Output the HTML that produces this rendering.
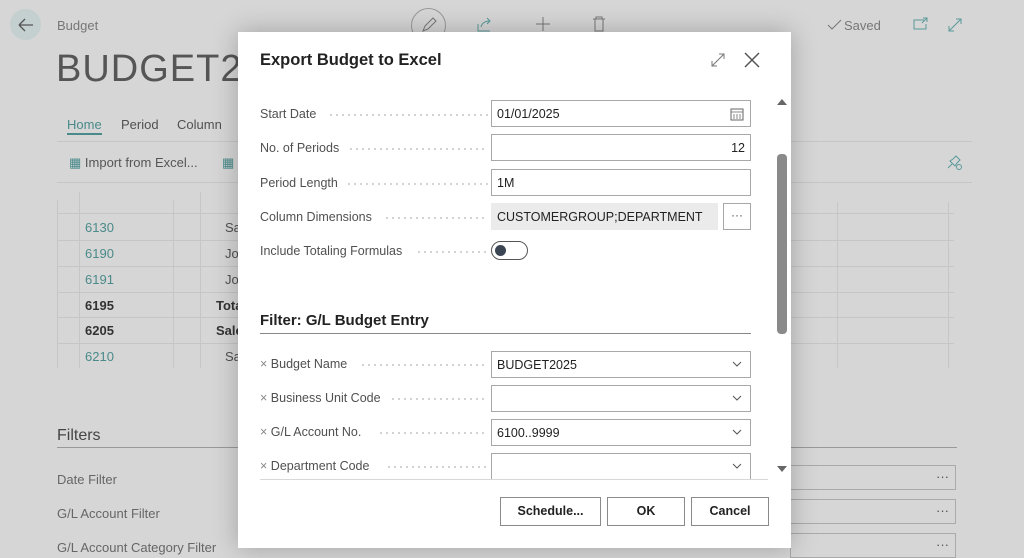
<!DOCTYPE html>
<html><head><meta charset="utf-8"><style>
*{box-sizing:border-box;margin:0;padding:0}
body{width:1024px;height:555px;overflow:hidden;background:#d6d6d6;font-family:"Liberation Sans",sans-serif;position:relative;color:#505050}
.a{position:absolute}
.t{font-size:13px;white-space:nowrap}
.teal{color:#4a8a8a}
.dlg{position:absolute;left:238px;top:32px;width:553px;height:516px;background:#fff;box-shadow:0 0 24px rgba(0,0,0,.25)}
.lbl{position:absolute;left:22px;font-size:12.5px;color:#505050;white-space:nowrap}
.dots{position:absolute;height:2px;background-image:radial-gradient(circle,#c4c4c4 0.8px,transparent 1px);background-size:6px 2px}
.inp{position:absolute;left:253px;width:260px;height:27px;border:1px solid #a8a8a8;font-size:12.5px;color:#222;padding:6px 5px;white-space:nowrap}
.chev{position:absolute;right:8px;top:7px;width:10px;height:10px}
.btn{position:absolute;top:465px;height:29px;border:1px solid #8a8a8a;font-size:12.5px;font-weight:bold;color:#222;text-align:center;line-height:27px}
.hl{position:absolute;height:1px;background:#c6c6c6}
.vl{position:absolute;width:1px;background:#c6c6c6}
.bx{position:absolute;border:1px solid #aaa;height:25px}
</style></head><body>
<div class="a" style="left:10px;top:9px;width:31px;height:31px;border-radius:50%;background:#c4cfcf"></div>
<svg class="a" style="left:16px;top:15px" width="20" height="20"><path d="M3 10H17M3 10L9 4M3 10L9 16" stroke="#555" stroke-width="1.3" fill="none"/></svg>
<div class="a t" style="left:57px;top:18px;color:#777">Budget</div>
<div class="a" style="left:56px;top:48px;font-size:38px;color:#555;letter-spacing:1px">BUDGET2025</div>
<div class="a" style="left:411px;top:8px;width:35px;height:35px;border:1px solid #999;border-radius:50%"></div>
<svg class="a" style="left:420px;top:16px" width="18" height="18"><path d="M3 15L5 10 13 2 16 5 8 13Z" stroke="#777" fill="none"/></svg>
<svg class="a" style="left:476px;top:16px" width="18" height="18"><path d="M2 8V15H14M5 11C6 7 9 5 14 5M11 2L14 5 11 8" stroke="#5a9a9a" fill="none"/></svg>
<svg class="a" style="left:534px;top:15px" width="18" height="18"><path d="M9 2V16M2 9H16" stroke="#777" fill="none"/></svg>
<svg class="a" style="left:591px;top:15px" width="16" height="18"><path d="M2 4H14M5 4V2H11V4M4 4V16H12V4" stroke="#777" fill="none"/></svg>
<svg class="a" style="left:827px;top:18px" width="16" height="14"><path d="M1 7L5 11 14 2" stroke="#777" fill="none"/></svg>
<div class="a t" style="left:844px;top:18px;color:#777">Saved</div>
<svg class="a" style="left:913px;top:17px" width="16" height="14"><path d="M11 3H1V12H13V7M10 1H14V5M14 1L9 6" stroke="#5a9a9a" fill="none"/></svg>
<svg class="a" style="left:946px;top:16px" width="18" height="18"><path d="M3 15L15 3M10 3H15V8M3 10V15H8" stroke="#5a9a9a" fill="none"/></svg>
<div class="a t teal" style="left:67px;top:117px;border-bottom:2px solid #4a8a8a;padding-bottom:1px">Home</div>
<div class="a t" style="left:121px;top:117px">Period</div>
<div class="a t" style="left:177px;top:117px">Column</div>
<div class="hl" style="left:57px;top:141px;width:915px"></div>
<div class="a t" style="left:69px;top:155px;color:#555"><span class="teal">▦</span> Import from Excel...</div>
<div class="a t teal" style="left:222px;top:155px">▦</div>
<svg class="a" style="left:946px;top:154px" width="16" height="16"><path d="M2 14L6 10M4 7L9 12 11 9 14 6 10 2 7 5Z" stroke="#5a9a9a" fill="none"/><circle cx="13" cy="13" r="2.5" stroke="#5a9a9a" fill="none"/></svg>
<div class="hl" style="left:57px;top:182px;width:915px"></div>
<div class="vl" style="left:57px;top:200px;height:168px"></div>
<div class="vl" style="left:79px;top:192px;height:176px"></div>
<div class="vl" style="left:173px;top:200px;height:168px"></div>
<div class="vl" style="left:200px;top:192px;height:176px"></div>
<div class="vl" style="left:837px;top:202px;height:166px"></div>
<div class="vl" style="left:948px;top:202px;height:166px"></div>
<div class="hl" style="left:57px;top:213px;width:897px"></div>
<div class="hl" style="left:57px;top:240px;width:897px"></div>
<div class="hl" style="left:57px;top:266px;width:897px"></div>
<div class="hl" style="left:57px;top:292px;width:897px"></div>
<div class="hl" style="left:57px;top:317px;width:897px"></div>
<div class="hl" style="left:57px;top:343px;width:897px"></div>
<div class="a t teal" style="left:85px;top:220px">6130</div><div class="a t" style="left:225px;top:220px">Sa</div>
<div class="a t teal" style="left:85px;top:246px">6190</div><div class="a t" style="left:225px;top:246px">Jo</div>
<div class="a t teal" style="left:85px;top:272px">6191</div><div class="a t" style="left:225px;top:272px">Jo</div>
<div class="a t" style="left:85px;top:298px;font-weight:bold;color:#333">6195</div><div class="a t" style="left:216px;top:298px;font-weight:bold;color:#333">Tota</div>
<div class="a t" style="left:85px;top:323px;font-weight:bold;color:#333">6205</div><div class="a t" style="left:216px;top:323px;font-weight:bold;color:#333">Sale</div>
<div class="a t teal" style="left:85px;top:349px">6210</div><div class="a t" style="left:225px;top:349px">Sa</div>
<div class="a" style="left:57px;top:427px;font-size:16px;color:#444">Filters</div>
<div class="hl" style="left:57px;top:447px;width:900px;background:#999"></div>
<div class="a t" style="left:57px;top:472px;color:#666">Date Filter</div>
<div class="a t" style="left:57px;top:506px;color:#666">G/L Account Filter</div>
<div class="a t" style="left:57px;top:540px;color:#666">G/L Account Category Filter</div>
<div class="bx" style="left:790px;top:465px;width:166px"></div><div class="a t" style="left:936px;top:469px">···</div>
<div class="bx" style="left:790px;top:499px;width:166px"></div><div class="a t" style="left:936px;top:503px">···</div>
<div class="bx" style="left:790px;top:533px;width:166px"></div><div class="a t" style="left:936px;top:537px">···</div>
<div class="dlg">
<div class="a" style="left:22px;top:19px;font-size:16.5px;font-weight:bold;color:#222">Export Budget to Excel</div>
<svg class="a" style="left:472px;top:20px" width="16" height="16"><path d="M2 14L14 2M9 2H14V7M2 9V14H7" stroke="#777" fill="none"/></svg>
<svg class="a" style="left:505px;top:19px" width="18" height="18"><path d="M2 2L16 16M16 2L2 16" stroke="#555" stroke-width="1.5" fill="none"/></svg>
<svg class="a" style="left:538px;top:65px" width="12" height="10"><path d="M1 8L6 2 11 8Z" fill="#666"/></svg>
<div class="a" style="left:539px;top:122px;width:10px;height:180px;background:#8a8a8a;border-radius:4px"></div>
<svg class="a" style="left:538px;top:432px" width="12" height="10"><path d="M1 2L6 8 11 2Z" fill="#666"/></svg>

<div class="lbl" style="top:75px">Start Date</div><div class="dots" style="left:90px;width:160px;top:82px"></div>
<div class="inp" style="top:68px">01/01/2025<svg class="a" style="right:6px;top:6px" width="14" height="14"><rect x="1" y="2" width="12" height="11" stroke="#666" fill="none"/><path d="M1 5H13M4 7V12M7 7V12M10 7V12" stroke="#888"/></svg></div>
<div class="lbl" style="top:109px">No. of Periods</div><div class="dots" style="left:110px;width:140px;top:116px"></div>
<div class="inp" style="top:102px;text-align:right">12</div>
<div class="lbl" style="top:144px">Period Length</div><div class="dots" style="left:108px;width:142px;top:151px"></div>
<div class="inp" style="top:137px">1M</div>
<div class="lbl" style="top:178px">Column Dimensions</div><div class="dots" style="left:146px;width:104px;top:185px"></div>
<div class="inp" style="top:171px;width:227px;background:#ebebeb;border-color:#ebebeb">CUSTOMERGROUP;DEPARTMENT</div>
<div class="a" style="left:485px;top:171px;width:28px;height:27px;border:1px solid #a8a8a8;text-align:center;font-size:12px;line-height:23px">···</div>
<div class="lbl" style="top:212px">Include Totaling Formulas</div><div class="dots" style="left:178px;width:72px;top:219px"></div>
<div class="a" style="left:253px;top:209px;width:37px;height:19px;border:1px solid #555;border-radius:10px"><div class="a" style="left:3px;top:3px;width:11px;height:11px;border-radius:50%;background:#3c4554"></div></div>

<div class="a" style="left:22px;top:280px;font-size:15px;font-weight:bold;color:#222">Filter: G/L Budget Entry</div>
<div class="a" style="left:22px;top:301px;width:491px;height:1px;background:#888"></div>
<div class="lbl" style="top:325px"><span style="color:#888">×</span> Budget Name</div><div class="dots" style="left:122px;width:128px;top:332px"></div>
<div class="inp" style="top:319px">BUDGET2025<svg class="chev" viewBox="0 0 10 10"><path d="M1 3L5 7 9 3" stroke="#555" fill="none"/></svg></div>
<div class="lbl" style="top:359px"><span style="color:#888">×</span> Business Unit Code</div><div class="dots" style="left:152px;width:98px;top:366px"></div>
<div class="inp" style="top:353px"><svg class="chev" viewBox="0 0 10 10"><path d="M1 3L5 7 9 3" stroke="#555" fill="none"/></svg></div>
<div class="lbl" style="top:393px"><span style="color:#888">×</span> G/L Account No.</div><div class="dots" style="left:140px;width:110px;top:400px"></div>
<div class="inp" style="top:387px">6100..9999<svg class="chev" viewBox="0 0 10 10"><path d="M1 3L5 7 9 3" stroke="#555" fill="none"/></svg></div>
<div class="lbl" style="top:427px"><span style="color:#888">×</span> Department Code</div><div class="dots" style="left:148px;width:102px;top:434px"></div>
<div class="inp" style="top:421px;height:26px;border-bottom:none"><svg class="chev" viewBox="0 0 10 10"><path d="M1 3L5 7 9 3" stroke="#555" fill="none"/></svg></div>
<div class="a" style="left:22px;top:447px;width:508px;height:1px;background:#d8d8d8"></div>
<div class="btn" style="left:262px;width:101px">Schedule...</div>
<div class="btn" style="left:369px;width:78px">OK</div>
<div class="btn" style="left:453px;width:78px">Cancel</div>
</div>
</body></html>
